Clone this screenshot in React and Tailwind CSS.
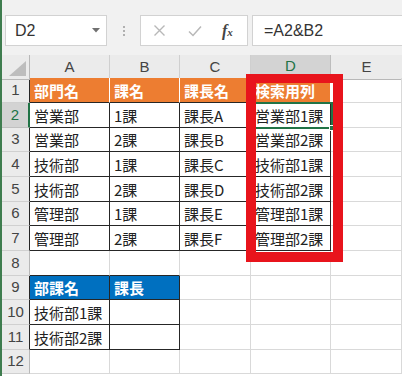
import React from "react";

const GRID = "border-r border-b border-[#d9d9d9]";
const BODY = "border-r border-b border-[#262626] text-[#222]";
const ORANGE = "bg-[#ed7d31] text-white font-bold border-r border-b border-r-white border-b-[#262626]";
const BLUE = "bg-[#0070c0] text-white font-bold border-r border-b border-[#262626]";
const ABOVE = "border-r border-b border-r-[#d9d9d9] border-b-[#262626]";

const RH = "bg-[#ebebeb] text-[#444] border-r border-b border-r-[#262626] border-b-[#d0d0d0]";
const RH_PLAIN = "bg-[#ebebeb] text-[#444] border-r border-b border-r-[#b8b8b8] border-b-[#d0d0d0]";
const RH_SEL = "bg-[#d3d3d3] text-[#217346] border-r-2 border-b border-r-[#217346] border-b-[#c0c0c0]";

const rows = [
  { n: 1, h: "h-[25px]", head: RH, cells: [["部門名", ORANGE], ["課名", ORANGE], ["課長名", ORANGE], ["検索用列", ORANGE], ["", GRID]] },
  { n: 2, h: "h-[25px]", head: RH_SEL, cells: [["営業部", BODY], ["1課", BODY], ["課長A", BODY], ["営業部1課", BODY], ["", GRID]] },
  { n: 3, h: "h-[24px]", head: RH, cells: [["営業部", BODY], ["2課", BODY], ["課長B", BODY], ["営業部2課", BODY], ["", GRID]] },
  { n: 4, h: "h-[25px]", head: RH, cells: [["技術部", BODY], ["1課", BODY], ["課長C", BODY], ["技術部1課", BODY], ["", GRID]] },
  { n: 5, h: "h-[25px]", head: RH, cells: [["技術部", BODY], ["2課", BODY], ["課長D", BODY], ["技術部2課", BODY], ["", GRID]] },
  { n: 6, h: "h-[24px]", head: RH, cells: [["管理部", BODY], ["1課", BODY], ["課長E", BODY], ["管理部1課", BODY], ["", GRID]] },
  { n: 7, h: "h-[25px]", head: RH, cells: [["管理部", BODY], ["2課", BODY], ["課長F", BODY], ["管理部2課", BODY], ["", GRID]] },
  { n: 8, h: "h-[25px]", head: RH_PLAIN, cells: [["", ABOVE], ["", ABOVE], ["", GRID], ["", GRID], ["", GRID]] },
  { n: 9, h: "h-[24px]", head: RH, cells: [["部課名", BLUE], ["課長", BLUE], ["", GRID], ["", GRID], ["", GRID]] },
  { n: 10, h: "h-[25px]", head: RH, cells: [["技術部1課", BODY], ["", BODY], ["", GRID], ["", GRID], ["", GRID]] },
  { n: 11, h: "h-[25px]", head: RH, cells: [["技術部2課", BODY], ["", BODY], ["", GRID], ["", GRID], ["", GRID]] },
  { n: 12, h: "h-[24px]", head: RH_PLAIN, cells: [["", GRID], ["", GRID], ["", GRID], ["", GRID], ["", GRID]] },
];

const COLS = "grid grid-cols-[28px_80px_70px_71px_80px_71px]";

function Cell({ text, cls }) {
  return (
    <div className={`flex items-center overflow-hidden whitespace-nowrap pl-[4px] text-[15px] leading-none ${cls}`}>
      {text}
    </div>
  );
}

export default function App() {
  return (
    <div className="relative w-[402px] h-[376px] overflow-hidden bg-white border-l-2 border-[#3f7d4f] font-['Noto_Sans_CJK_JP',sans-serif]">
      {/* Formula bar */}
      <div className="h-[55px] bg-[#f1f1f1] pt-[15px] flex items-start">
        <div className="ml-[3px] w-[102px] h-[31px] bg-white border border-[#d2d2d2] flex items-center justify-between pl-[9px] pr-[6px]">
          <span className="font-['Liberation_Sans',sans-serif] text-[16px] text-[#333]">D2</span>
          <svg width="8" height="5" viewBox="0 0 8 5"><path d="M0 0h8L4 4.5z" fill="#707070" /></svg>
        </div>
        <div className="w-[33px] h-[31px] flex flex-col items-center justify-center gap-[2px]">
          <span className="w-[2px] h-[2px] bg-[#b0b0b0]" />
          <span className="w-[2px] h-[2px] bg-[#b0b0b0]" />
          <span className="w-[2px] h-[2px] bg-[#b0b0b0]" />
        </div>
        <div className="w-[108px] h-[31px] bg-white border border-[#d2d2d2] flex items-center">
          <svg className="ml-[12px]" width="13" height="13" viewBox="0 0 13 13">
            <path d="M1.5 1.5l10 10M11.5 1.5l-10 10" stroke="#b8b8b8" strokeWidth="1.4" />
          </svg>
          <svg className="ml-[22px]" width="14" height="12" viewBox="0 0 14 12">
            <path d="M1 6.5l4 4L13 1.5" stroke="#b8b8b8" strokeWidth="1.5" fill="none" />
          </svg>
          <span className="ml-[20px] font-['Liberation_Serif',serif] italic font-bold text-[16px] text-[#444] leading-none">
            f<span className="text-[11px]">x</span>
          </span>
        </div>
        <div className="ml-[4px] flex-1 h-[31px] bg-white border border-r-0 border-[#d2d2d2] flex items-center pl-[11px]">
          <span className="font-['Liberation_Sans',sans-serif] text-[16px] text-[#333]">=A2&amp;B2</span>
        </div>
      </div>

      {/* Column headers */}
      <div className={`${COLS} h-[23px] font-['Liberation_Sans',sans-serif] text-[15px] text-[#444]`}>
        <div className="relative bg-[#ebebeb] border-r border-b border-[#b8b8b8]">
          <svg className="absolute right-[3px] bottom-[3px]" width="17" height="15" viewBox="0 0 17 15">
            <path d="M17 0V15H0z" fill="#bdbdbd" />
          </svg>
        </div>
        <div className="flex items-center justify-center bg-[#ebebeb] border-r border-b border-r-[#cfcfcf] border-b-[#b8b8b8]">A</div>
        <div className="flex items-center justify-center bg-[#ebebeb] border-r border-b border-r-[#cfcfcf] border-b-[#b8b8b8]">B</div>
        <div className="flex items-center justify-center bg-[#ebebeb] border-r border-b border-r-[#cfcfcf] border-b-[#b8b8b8]">C</div>
        <div className="flex items-center justify-center bg-[#d3d3d3] text-[#217346] border-r border-b-2 border-r-[#bdbdbd] border-b-[#217346]">D</div>
        <div className="flex items-center justify-center bg-[#ebebeb] border-b border-[#b8b8b8]">E</div>
      </div>

      {/* Rows */}
      {rows.map((r) => (
        <div key={r.n} className={`${COLS} ${r.h}`}>
          <div className={`flex items-center justify-center font-['Liberation_Sans',sans-serif] text-[15px] ${r.head}`}>{r.n}</div>
          {r.cells.map(([t, c], i) => (
            <Cell key={i} text={t} cls={c} />
          ))}
        </div>
      ))}

      {/* Active cell D2 */}
      <div className="absolute left-[251px] top-[102px] w-[80px] h-[27px] border-2 border-[#217346]" />
      <div className="absolute left-[327px] top-[125px] w-[6px] h-[6px] bg-[#217346] border border-white" />

      {/* Red highlight */}
      <div className="absolute left-[244px] top-[74px] w-[97px] h-[188px] border-[10px] border-t-[9px] border-[#e8141c]" />
    </div>
  );
}
